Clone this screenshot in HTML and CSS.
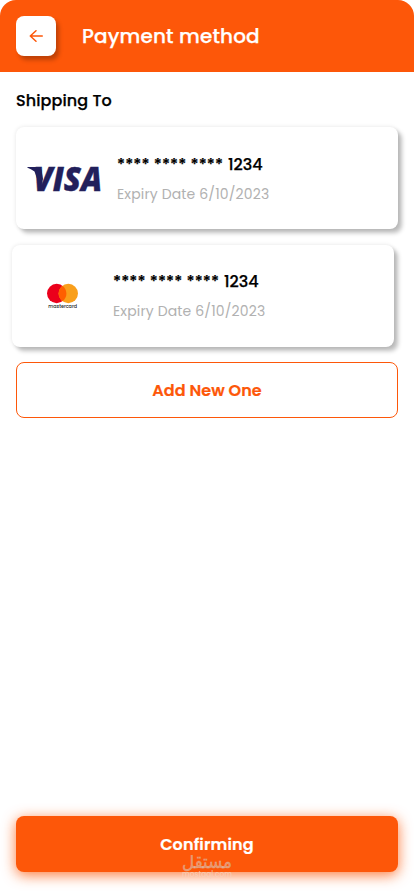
FILE: index.html
```html
<!DOCTYPE html>
<html lang="en">
<head>
<meta charset="utf-8">
<meta name="viewport" content="width=device-width, initial-scale=1">
<title>Payment method</title>
<link rel="stylesheet" href="styles.css">
</head>
<body>
<div class="screen">
  <header class="header">
    <button class="back" aria-label="Back">
      <svg width="14" height="14" viewBox="0 0 14 14" fill="none" stroke="#fd5709" stroke-width="1.5" stroke-linecap="round" stroke-linejoin="round"><path d="M13.3 7H1.3M7 1.7L1.3 7L7 12.3"/></svg>
    </button>
    <h1 class="title">Payment method</h1>
  </header>
  <main class="content">
    <h2 class="section">Shipping To</h2>
    <div class="card">
      <svg class="logo" width="100" height="102" viewBox="0 0 100 102">
        <path d="M11 40.6L12 40H22.5Q25 40 25.5 43L27 52L24 60L18.5 44.5Q15 42 11 40.6Z" fill="#22205b"/>
        <text class="visa" x="17.5" y="64" textLength="68.5" lengthAdjust="spacingAndGlyphs">VISA</text>
      </svg>
      <div class="details">
        <p class="number"><span class="stars">**** **** ****</span><span class="digits">1234</span></p>
        <p class="expiry">Expiry Date 6/10/2023</p>
      </div>
    </div>
    <div class="card shifted">
      <svg class="logo" width="100" height="102" viewBox="0 0 100 102">
        <circle cx="44.7" cy="48.5" r="9.7" fill="#eb001b"/>
        <circle cx="56.3" cy="48.5" r="9.7" fill="#f99f1b"/>
        <path d="M50.5 40.7a9.7 9.7 0 0 1 0 15.6a9.7 9.7 0 0 1 0-15.6Z" fill="#ff5f00"/>
        <text class="mc" x="36.3" y="62.8" textLength="28.7" lengthAdjust="spacingAndGlyphs">mastercard</text>
      </svg>
      <div class="details">
        <p class="number"><span class="stars">**** **** ****</span><span class="digits">1234</span></p>
        <p class="expiry">Expiry Date 6/10/2023</p>
      </div>
    </div>
    <button class="add"><span>Add New One</span></button>
  </main>
  <footer class="footer">
    <button class="confirm"><span>Confirming</span></button>
    <svg class="mark" width="54" height="24" viewBox="0 0 54 24">
      <text class="mark-ar" x="27" y="12.5" text-anchor="middle" textLength="50" lengthAdjust="spacingAndGlyphs">مستقل</text>
      <text class="mark-en" x="2" y="21.5" textLength="50" lengthAdjust="spacingAndGlyphs">mostaql.com</text>
    </svg>
  </footer>
</div>
</body>
</html>
```
FILE: styles.css
```css
* { box-sizing: border-box; margin: 0; padding: 0; }
body { background: #fff; font-family: Poppins, Inter, sans-serif; }
button { font: inherit; border: 0; }
.screen {
  width: 414px; height: 896px; background: #fff; border-radius: 16px;
  overflow: hidden; display: flex; flex-direction: column;
}
.header {
  height: 72px; flex: none; background: #fd5709; padding: 0 16px;
  display: flex; align-items: center; gap: 26px;
}
.back {
  width: 40px; height: 40px; border-radius: 8px; background: #fff;
  display: flex; align-items: center; justify-content: center;
  box-shadow: 3px 4px 4px rgba(0, 0, 0, .25);
}
.title { font-size: 20px; line-height: 30px; font-weight: 500; color: #fff; letter-spacing: .15px; -webkit-text-stroke: .25px; }
.content { flex: 1; padding: 17px 16px 0; }
.section { font-size: 16px; line-height: 24px; font-weight: 500; color: #000; margin-bottom: 14px; letter-spacing: .1px; -webkit-text-stroke: .25px; }
.card {
  height: 102px; border-radius: 8px; background: #fff; display: flex;
  margin-bottom: 16px; box-shadow: 4px 4px 4px rgba(0, 0, 0, .25), 0 0 4px rgba(0, 0, 0, .1);
}
.card.shifted { margin: 0 20px 15px -4px; width: 382px; }
.card.shifted .details { padding-top: 25px; }
.logo { flex: none; }
.details { padding: 26px 0 0 1px; }
.number { display: flex; font-size: 16px; line-height: 24px; font-weight: 500; color: #000; -webkit-text-stroke: .25px; }
.stars { width: 111px; letter-spacing: .07px; white-space: nowrap; }
.expiry { font-size: 14px; line-height: 21px; margin-top: 7px; color: #b1b1b1; letter-spacing: .15px; }
.add {
  width: 100%; height: 56px; border: 1px solid #fd5709; border-radius: 8px;
  background: #fff; color: #fd5709; font-size: 16px; font-weight: 600; letter-spacing: .05px; -webkit-text-stroke: .2px;
}
.footer { position: relative; padding: 0 16px 24px; }
.confirm {
  display: block; width: 100%; height: 56px; border-radius: 8px; background: #fd5709;
  color: #fff; font-size: 16px; font-weight: 600; letter-spacing: .15px; -webkit-text-stroke: .2px;
  box-shadow: 0 3px 14px rgba(253, 87, 9, .8);
}
.visa { font: italic 800 33.5px "Open Sans", sans-serif; fill: #22205b; stroke: #22205b; stroke-width: .4; }
.mc { font: 500 4.8px Poppins, Inter, sans-serif; fill: #222; }
.mark { position: absolute; left: 180px; top: 39px; }
.mark-ar { font: 400 19px "DejaVu Sans", sans-serif; fill: #d9c8bc; fill-opacity: .55; stroke: #d9c8bc; stroke-opacity: .35; stroke-width: .8; }
.mark-en { font: 500 8.5px Poppins, Inter, sans-serif; fill: #f6d3bf; fill-opacity: .75; }
```
